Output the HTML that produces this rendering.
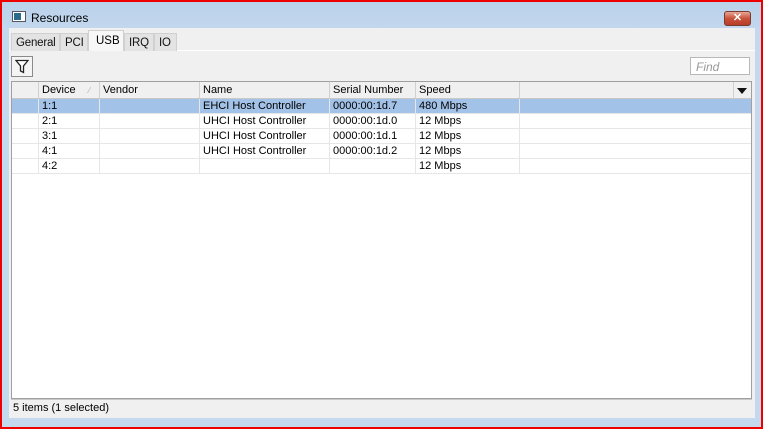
<!DOCTYPE html>
<html><head><style>
*{margin:0;padding:0;box-sizing:border-box}
body{width:763px;height:429px;overflow:hidden;background:#e00;font-family:"Liberation Sans",Arial,sans-serif;font-size:11px;color:#000;position:relative}
.a{position:absolute}
.frame{left:2px;top:2px;width:759px;height:425px;background:linear-gradient(#b9d1ea,#c4d8ee 30px,#c4d9ee);}
.content{left:9px;top:28px;width:746px;height:390px;background:#f0f0f0}
.tab{top:33px;height:18px;background:#e3e3e3;border:1px solid #d0d0d0;border-bottom:none;font-size:11.5px;padding:3px 0 0 4px;color:#111;letter-spacing:-0.2px}
.grid{left:11px;top:81px;width:741px;height:318px;background:#fff;border:1px solid #a0a0a0}
.hdr{top:0;height:17px;background:#f0f0f0;border-bottom:1px solid #c8c8c8}
.c{position:absolute;height:100%;border-right:1px solid #d0d0d0;padding:2px 0 0 3px;white-space:nowrap}
.row{position:absolute;left:0;width:739px;height:15px;border-bottom:1px solid #e6e6e6}
.row .c{padding:1px 0 0 3px;border-right:1px solid #e6e6e6}
.sel{background:#a3c2e8}
</style></head><body>
<div class="a frame"></div>
<div class="a" style="left:12px;top:11px;width:14px;height:11px;background:#fff;border:1px solid #556"><div style="position:absolute;left:1px;top:1px;width:7px;height:7px;background:#2a6a8a"></div></div>
<div class="a" style="left:31px;top:11px;font-size:12px">Resources</div>
<div class="a" style="left:724px;top:11px;width:27px;height:15px;border-radius:3px;background:linear-gradient(#e9a797,#c8513a 50%,#b73d28);border:1px solid #7a3a30;color:#fff;font-size:11px;font-weight:bold;text-align:center;line-height:13px">✕</div>
<div class="a content"></div>
<div class="a" style="left:9px;top:50px;width:746px;height:1px;background:#fff"></div>
<div class="a tab" style="left:11px;width:49px">General</div>
<div class="a tab" style="left:60px;width:28px">PCI</div>
<div class="a" style="left:88px;top:30px;width:36px;height:21px;background:#f7f7f7;border:1px solid #d0d0d0;border-bottom:none;font-size:11.5px;padding:4px 0 0 7px">USB</div>
<div class="a tab" style="left:124px;width:30px">IRQ</div>
<div class="a tab" style="left:154px;width:23px">IO</div>
<div class="a" style="left:11px;top:56px;width:22px;height:21px;border:1px solid #8a8a8a;background:#f4f4f4"></div>
<svg class="a" style="left:15px;top:59px" width="14" height="15" viewBox="0 0 14 15"><path d="M1 1.5H13L8.5 7V13.5L5.5 12V7Z" fill="#fff" stroke="#222" stroke-width="1.3"/></svg>
<div class="a" style="left:690px;top:57px;width:60px;height:18px;background:#fff;border:1px solid #b8b8b8;color:#999;font-style:italic;font-size:12px;padding:2px 0 0 5px">Find</div>
<div class="a grid">
 <div class="a hdr" style="left:0;width:739px">
  <div class="c" style="left:0;width:27px"></div>
  <div class="c" style="left:27px;width:61px">Device <span style="color:#aaa;font-size:8px;margin-left:10px">⁄</span></div>
  <div class="c" style="left:88px;width:100px">Vendor</div>
  <div class="c" style="left:188px;width:130px">Name</div>
  <div class="c" style="left:318px;width:86px">Serial Number</div>
  <div class="c" style="left:404px;width:104px">Speed</div>
  <div class="c" style="left:508px;width:214px"></div>
  <div class="a" style="left:725px;top:6px;width:0;height:0;border-left:5px solid transparent;border-right:5px solid transparent;border-top:6px solid #111"></div>
 </div>
 <div class="row sel" style="top:17px"><div class="c" style="left:0;width:27px"></div><div class="c" style="left:27px;width:61px">1:1</div><div class="c" style="left:88px;width:100px"></div><div class="c" style="left:188px;width:130px">EHCI Host Controller</div><div class="c" style="left:318px;width:86px">0000:00:1d.7</div><div class="c" style="left:404px;width:104px">480 Mbps</div></div>
 <div class="row" style="top:32px"><div class="c" style="left:0;width:27px"></div><div class="c" style="left:27px;width:61px">2:1</div><div class="c" style="left:88px;width:100px"></div><div class="c" style="left:188px;width:130px">UHCI Host Controller</div><div class="c" style="left:318px;width:86px">0000:00:1d.0</div><div class="c" style="left:404px;width:104px">12 Mbps</div></div>
 <div class="row" style="top:47px"><div class="c" style="left:0;width:27px"></div><div class="c" style="left:27px;width:61px">3:1</div><div class="c" style="left:88px;width:100px"></div><div class="c" style="left:188px;width:130px">UHCI Host Controller</div><div class="c" style="left:318px;width:86px">0000:00:1d.1</div><div class="c" style="left:404px;width:104px">12 Mbps</div></div>
 <div class="row" style="top:62px"><div class="c" style="left:0;width:27px"></div><div class="c" style="left:27px;width:61px">4:1</div><div class="c" style="left:88px;width:100px"></div><div class="c" style="left:188px;width:130px">UHCI Host Controller</div><div class="c" style="left:318px;width:86px">0000:00:1d.2</div><div class="c" style="left:404px;width:104px">12 Mbps</div></div>
 <div class="row" style="top:77px"><div class="c" style="left:0;width:27px"></div><div class="c" style="left:27px;width:61px">4:2</div><div class="c" style="left:88px;width:100px"></div><div class="c" style="left:188px;width:130px"></div><div class="c" style="left:318px;width:86px"></div><div class="c" style="left:404px;width:104px">12 Mbps</div></div>
</div>
<div class="a" style="left:11px;top:399px;width:741px;height:18px;background:#f0f0f0;border-top:1px solid #c8c8c8;padding:2px 0 0 2px;font-size:11px">5 items (1 selected)</div>
</body></html>
